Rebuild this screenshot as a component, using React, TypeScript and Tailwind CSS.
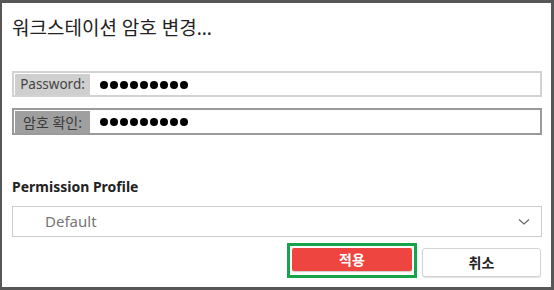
import React from "react";

const KR = { fontFamily: '"Noto Sans", "Noto Sans CJK KR", sans-serif' };

function Dots() {
  return (
    <div className="flex items-center gap-[2px] ml-[10px]">
      {Array.from({ length: 9 }).map((_, i) => (
        <span key={i} className="block w-[8px] h-[8px] rounded-full bg-black" />
      ))}
    </div>
  );
}

export default function App() {
  return (
    <div
      className="w-[554px] h-[290px] bg-white border-t-[3px] border-l-2 border-r-[3px] border-b-[3px] border-[#575757] flex flex-col pl-[10px] pr-[9px] box-border"
      style={KR}
    >
      <div className="mt-[12px] h-[26px] text-[19px] leading-[26px] text-[#222]">워크스테이션 암호 변경...</div>

      <div className="mt-[30px] h-[26px] border-2 border-[#d2d2d2] flex items-stretch p-[1px] pb-0">
        <div className="w-[75px] bg-[#cfcfcf] text-[#444] text-[13.5px] flex items-center justify-center">Password:</div>
        <Dots />
      </div>

      <div className="mt-[11px] h-[27px] border-2 border-[#9a9a9a] flex items-stretch p-[1px] pb-0">
        <div className="w-[75px] bg-[#9f9f9f] text-[#3a3a3a] text-[14px] flex items-center justify-center">암호 확인:</div>
        <Dots />
      </div>

      <div className="mt-[43px] text-[14px] leading-[18px] font-bold text-[#222]">Permission Profile</div>

      <div className="mt-[10px] h-[31px] border border-[#cccccc] flex items-center justify-between pl-[32px] pr-[11px]">
        <span className="text-[15px] text-[#777]">Default</span>
        <svg width="12" height="8" viewBox="0 0 12 8" fill="none">
          <path d="M1 1.5 L6 6 L11 1.5" stroke="#666" strokeWidth="1.2" />
        </svg>
      </div>

      <div className="mt-[6px] flex justify-end items-start gap-[5px] pr-[1px]">
        <div className="w-[130px] h-[35px] border-[3px] border-[#16a44a] p-[2px] pb-[4px]">
          <button className="w-full h-full bg-[#ee4540] rounded-[2px] text-white font-bold text-[14px] flex items-center justify-center shadow-[0_1px_1px_rgba(0,0,0,0.2)]">
            적용
          </button>
        </div>
        <button className="mt-[5px] w-[119px] h-[29px] bg-white border border-[#d4d4d4] rounded-[3px] text-[#222] font-bold text-[14px] flex items-center justify-center shadow-[0_1px_1px_rgba(0,0,0,0.12)]">
          취소
        </button>
      </div>
    </div>
  );
}
